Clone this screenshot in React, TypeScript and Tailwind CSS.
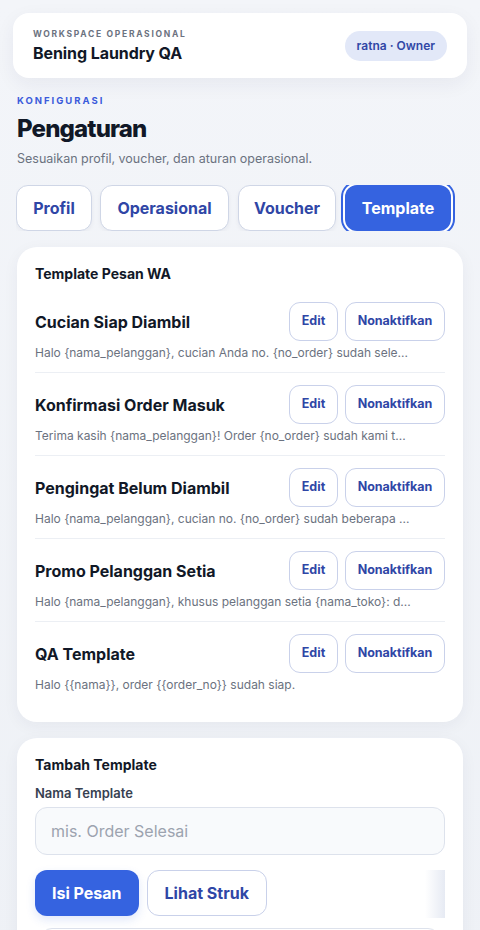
import React from "react";

const rows = [
  { t: "Cucian Siap Diambil", d: "Halo {nama_pelanggan}, cucian Anda no. {no_order} sudah sele..." },
  { t: "Konfirmasi Order Masuk", d: "Terima kasih {nama_pelanggan}! Order {no_order} sudah kami t..." },
  { t: "Pengingat Belum Diambil", d: "Halo {nama_pelanggan}, cucian no. {no_order} sudah beberapa ..." },
  { t: "Promo Pelanggan Setia", d: "Halo {nama_pelanggan}, khusus pelanggan setia {nama_toko}: d..." },
  { t: "QA Template", d: "Halo {{nama}}, order {{order_no}} sudah siap." },
];

const tabs = [
  { t: "Profil", w: "w-[76px]", m: "" },
  { t: "Operasional", w: "w-[129px]", m: "ml-[8px]" },
  { t: "Voucher", w: "w-[98px]", m: "ml-[9px]" },
];

export default function App() {
  return (
    <div
      className="min-h-[930px] w-[480px] overflow-hidden bg-[linear-gradient(180deg,#f3f5f9_0%,#eef1f6_100%)] text-[#0f172a]"
      style={{ fontFamily: "Inter, 'Noto Sans', sans-serif" }}
    >
      <div className="pt-[13px] px-[13px]">
        <div className="flex items-center justify-between rounded-[16px] bg-white pl-[20px] pr-[20px] h-[65px] shadow-[0_6px_20px_rgba(30,41,80,0.06)]">
          <div className="flex flex-col">
            <span className="text-[8.5px] font-bold tracking-[0.2em] text-[#6b7280] leading-[12px]">WORKSPACE OPERASIONAL</span>
            <span className="text-[16px] font-bold text-[#111827] leading-[22px] mt-[2px] tracking-[-0.005em]">Bening Laundry QA</span>
          </div>
          <span className="rounded-full bg-[#e2e8f8] px-[12px] h-[30px] flex items-center text-[12px] font-semibold text-[#3147a6]">ratna · Owner</span>
        </div>
      </div>

      <div className="px-[17px] pt-[17px]">
        <div className="text-[9.5px] font-bold tracking-[0.21em] text-[#3b5bdb] leading-[12px]">KONFIGURASI</div>
        <div className="text-[24px] font-extrabold tracking-[-0.035em] text-[#111827] leading-[30px] mt-[7px]">Pengaturan</div>
        <div className="text-[12.5px] text-[#6b7280] leading-[18px] mt-[6px]">Sesuaikan profil, voucher, dan aturan operasional.</div>
      </div>

      <div className="mt-[17px] ml-[16px] mr-[12px] overflow-hidden">
        <div className="flex">
          {tabs.map((t) => (
            <div key={t.t} className={`${t.w} ${t.m} shrink-0 h-[46px] flex items-center justify-center rounded-[12px] border border-[#cfd6e6] bg-white text-[16px] font-bold text-[#2f46a6] shadow-[0_2px_4px_rgba(30,41,80,0.05)]`}>
              {t.t}
            </div>
          ))}
          <div className="w-[106px] ml-[9px] shrink-0 h-[46px] flex items-center justify-center rounded-[12px] bg-[#3563e0] text-[16px] font-bold text-white ring-2 ring-[#3563e0] ring-offset-2 ring-offset-white">
            Template
          </div>
        </div>
      </div>

      <div className="mx-[17px] mt-[16px] rounded-[20px] bg-white px-[18px] pt-[18px] pb-[18px] shadow-[0_4px_16px_rgba(30,41,80,0.05)]">
        <div className="text-[14px] font-bold text-[#111827] leading-[18px]">Template Pesan WA</div>
        <div className="mt-[19px] flex flex-col">
          {rows.map((r, i) => (
            <div key={r.t} className={`${i > 0 ? "pt-[12px]" : ""} pb-[11px] ${i < rows.length - 1 ? "border-b border-[#eceff4]" : ""}`}>
              <div className="flex items-center justify-between">
                <span className="text-[16px] font-bold text-[#111827]">{r.t}</span>
                <div className="flex gap-[7px]">
                  <span className="h-[39px] w-[49px] flex items-center justify-center rounded-[11px] border border-[#c9d1ea] bg-white text-[12.5px] font-bold text-[#2f46a6]">Edit</span>
                  <span className="h-[39px] w-[100px] flex items-center justify-center rounded-[11px] border border-[#c9d1ea] bg-white text-[12.5px] font-bold text-[#2f46a6]">Nonaktifkan</span>
                </div>
              </div>
              <div className="mt-[4px] text-[12px] text-[#6b7280] leading-[16px] whitespace-nowrap">{r.d}</div>
            </div>
          ))}
        </div>
      </div>

      <div className="mx-[17px] mt-[16px] rounded-[20px] bg-white px-[18px] pt-[18px] pb-[20px] shadow-[0_4px_16px_rgba(30,41,80,0.05)]">
        <div className="text-[14px] font-bold text-[#111827] leading-[18px]">Tambah Template</div>
        <div className="mt-[11px] text-[13px] font-semibold text-[#374151] leading-[16px]">Nama Template</div>
        <div className="mt-[6px] h-[48px] rounded-[12px] border border-[#dde2ec] bg-[#f8fafc] flex items-center px-[15px] text-[16px] text-[#9ca3af]">
          mis. Order Selesai
        </div>
        <div className="relative mt-[15px] flex gap-[8px]">
          <div className="h-[46px] flex items-center rounded-[12px] bg-[#3563e0] px-[17px] text-[16px] font-bold text-white shadow-[0_4px_10px_rgba(53,99,224,0.15)]">Isi Pesan</div>
          <div className="h-[46px] flex items-center rounded-[12px] border border-[#c9d1ea] bg-white px-[17px] text-[16px] font-bold text-[#2f46a6]">Lihat Struk</div>
          <div className="absolute right-0 top-0 h-[48px] w-[20px] bg-[linear-gradient(90deg,rgba(238,241,247,0),#e6eaf3)]" />
        </div>
        <div className="mt-[12px] mx-[5px] h-[40px] rounded-t-[12px] border border-[#dde2ec]" />
      </div>
    </div>
  );
}
